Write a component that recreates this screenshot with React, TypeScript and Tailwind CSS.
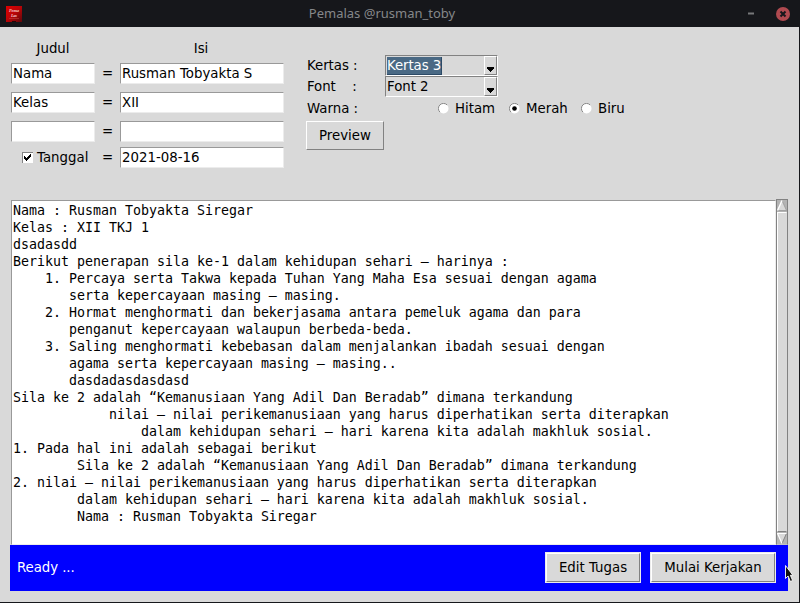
import React from "react";

const lines: string[] = [
  "Nama : Rusman Tobyakta Siregar",
  "Kelas : XII TKJ 1",
  "dsadasdd",
  "Berikut penerapan sila ke-1 dalam kehidupan sehari – harinya :",
  "    1. Percaya serta Takwa kepada Tuhan Yang Maha Esa sesuai dengan agama",
  "       serta kepercayaan masing – masing.",
  "    2. Hormat menghormati dan bekerjasama antara pemeluk agama dan para",
  "       penganut kepercayaan walaupun berbeda-beda.",
  "    3. Saling menghormati kebebasan dalam menjalankan ibadah sesuai dengan",
  "       agama serta kepercayaan masing – masing..",
  "       dasdadasdasdasd",
  "Sila ke 2 adalah “Kemanusiaan Yang Adil Dan Beradab” dimana terkandung",
  "            nilai – nilai perikemanusiaan yang harus diperhatikan serta diterapkan",
  "                dalam kehidupan sehari – hari karena kita adalah makhluk sosial.",
  "1. Pada hal ini adalah sebagai berikut",
  "        Sila ke 2 adalah “Kemanusiaan Yang Adil Dan Beradab” dimana terkandung",
  "2. nilai – nilai perikemanusiaan yang harus diperhatikan serta diterapkan",
  "        dalam kehidupan sehari – hari karena kita adalah makhluk sosial.",
  "        Nama : Rusman Tobyakta Siregar",
];

function Entry({ value, width }: { value: string; width: string }) {
  return (
    <div
      className={`${width} h-[21px] shrink-0 overflow-hidden whitespace-pre border border-t-[#999] border-l-[#999] border-r-[#ececec] border-b-[#ececec] bg-white pl-px leading-[19px]`}
    >
      {value}
    </div>
  );
}

function Row({ label, value }: { label: React.ReactNode; value: string }) {
  return (
    <div className="flex h-[21px] items-center">
      {label}
      <div className="w-[25px] text-center">=</div>
      <Entry value={value} width="w-[164px]" />
    </div>
  );
}

function Combo({ value, selected }: { value: string; selected?: boolean }) {
  return (
    <div className="flex h-[21px] w-[113px] border border-t-[#828282] border-l-[#828282] border-r-white border-b-white pl-px">
      <div className="flex flex-1 items-start whitespace-nowrap">
        <span
          className={
            selected
              ? "mt-px h-[18px] w-[55px] border-r border-b border-[#2c4a66] bg-[#4a6984] leading-[17px] tracking-[-0.1px] text-white"
              : "mt-px leading-[17px] tracking-[-0.05px]"
          }
        >
          {value}
        </span>
      </div>
      <div className="flex h-[19px] w-[13px] items-end justify-center border border-t-white border-l-white border-r-[#828282] border-b-[#828282] pb-[2px]">
        <svg width="7" height="5" viewBox="0 0 7 5" shapeRendering="crispEdges">
          <path d="M0 0h7v2H0zM1 2h5v1H1zM2 3h3v1H2zM3 4h1v1H3z" fill="#000" />
        </svg>
      </div>
    </div>
  );
}

function Radio({ label, checked, width }: { label: string; checked?: boolean; width: string }) {
  return (
    <div className={`flex ${width} items-center`}>
      <svg width="11" height="11" viewBox="0 0 11 11">
        <circle cx="5.5" cy="5.5" r="5" fill="#fff" />
        <path d="M1.9 9.1A5 5 0 0 1 9.1 1.9" fill="none" stroke="#888" />
        {checked && <circle cx="5.5" cy="5.5" r="2.3" fill="#000" />}
      </svg>
      <span className="ml-[6px]">{label}</span>
    </div>
  );
}

function Button({ label, className }: { label: string; className: string }) {
  return (
    <div
      className={`${className} flex items-center justify-center border border-t-white border-l-white border-r-[#828282] border-b-[#828282] bg-[#d9d9d9] whitespace-nowrap`}
    >
      {label}
    </div>
  );
}

export default function App() {
  return (
    <div className="relative flex h-[603px] w-[800px] flex-col overflow-hidden bg-[#d9d9d9] font-['DejaVu_Sans',sans-serif] text-[13.33px] leading-[17px] text-black">
      <header className="flex h-[27px] shrink-0 items-center bg-[#16171b] pl-[6px] pr-[10px]">
        <svg width="16" height="16" viewBox="0 0 16 16">
          <defs>
            <linearGradient id="logo" x1="0" y1="0" x2="1" y2="1">
              <stop offset="0" stopColor="#e00000" />
              <stop offset="0.5" stopColor="#b90508" />
              <stop offset="1" stopColor="#5d080b" />
            </linearGradient>
          </defs>
          <rect width="16" height="16" fill="url(#logo)" />
          <text x="3" y="6.2" fontSize="4.5" fontFamily="Liberation Serif, serif" fontStyle="italic" fontWeight="700" fill="#f3c8c8" textLength="10">Pema</text>
          <text x="5" y="11.2" fontSize="4.5" fontFamily="Liberation Serif, serif" fontStyle="italic" fontWeight="700" fill="#f3c8c8" textLength="6">Las</text>
          <path d="M3 12.5h10" stroke="#c84848" strokeWidth="0.5" />
          <path d="M6 15.5h4" stroke="#260506" />
        </svg>
        <div className="flex-1 pr-[5px] text-center font-['Noto_Sans',sans-serif] text-[13px] text-[#85878a]">
          <span>Pemalas @rusman_toby</span>
        </div>
        <svg width="43" height="14" viewBox="0 0 43 14">
          <path d="M1 5.5h6v2H1z" fill="#77787a" />
          <circle cx="36" cy="7" r="7" fill="#b04a50" />
          <path d="M33.5 4.5l5 5m0-5l-5 5" stroke="#16171b" strokeWidth="2" />
        </svg>
      </header>

      <div className="flex min-h-0 flex-1 flex-col border-r border-b border-[#16171b] pl-[10px] pr-[11px]">
        <section className="flex h-[172px] shrink-0">
          <div className="flex w-[296px] flex-col pl-px pt-[13px]">
            <div className="flex h-[17px]">
              <div className="w-[84px] text-center">Judul</div>
              <div className="ml-[25px] w-[162px] text-center">Isi</div>
            </div>
            <div className="mt-[6px] flex flex-col gap-2">
              <Row label={<Entry value="Nama" width="w-[84px]" />} value="Rusman Tobyakta S" />
              <Row label={<Entry value="Kelas" width="w-[84px]" />} value="XII" />
              <Row label={<Entry value="" width="w-[84px]" />} value="" />
            </div>
            <div className="mt-[5px]">
              <Row
                label={
                  <div className="flex w-[84px] items-center pl-[11px]">
                    <svg width="11" height="11" viewBox="0 0 11 11" shapeRendering="crispEdges">
                      <path d="M0 0h11v11H0z" fill="#fff" />
                      <path d="M0 0h11v1H1v10H0z" fill="#828282" />
                      <path d="M2 4h1v3H2zM3 5h1v3H3zM4 6h1v3H4zM5 5h1v3H5zM6 4h1v3H6zM7 3h1v3H7zM8 2h1v3H8z" fill="#000" />
                    </svg>
                    <span className="ml-[4px]">Tanggal</span>
                  </div>
                }
                value="2021-08-16"
              />
            </div>
          </div>

          <div className="flex flex-col pt-[28px]">
            <div className="flex h-[21px] items-center">
              <div className="w-[79px] whitespace-pre pl-px tracking-[-0.05px]">Kertas :</div>
              <Combo value="Kertas 3" selected />
            </div>
            <div className="flex h-[21px] items-center">
              <div className="w-[79px] whitespace-pre pl-px tracking-[-0.1px]">{"Font    :"}</div>
              <Combo value="Font 2" />
            </div>
            <div className="flex h-[22px] items-center">
              <div className="w-[132px] pl-px">Warna :</div>
              <Radio label="Hitam" width="w-[71px]" />
              <Radio label="Merah" checked width="w-[72px]" />
              <Radio label="Biru" width="w-[50px]" />
            </div>
            <Button label="Preview" className="mt-[2px] h-[29px] w-[78px]" />
          </div>
        </section>

        <section className="flex h-[346px] shrink-0 pl-px">
          <div className="mt-px flex-1 overflow-hidden border border-t-[#999] border-l-[#999] border-r-[#ececec] border-b-[#ececec] bg-white pl-px pt-px font-['DejaVu_Sans_Mono',monospace] text-[13.29px]">
            {lines.map((line, i) => (
              <div key={i} className="h-[17px] whitespace-pre leading-[17px]">
                {line}
              </div>
            ))}
          </div>
          <div className="flex w-[12px] flex-col border border-t-[#828282] border-l-[#828282] border-r-[#828282] border-b-[#c3c3c3] bg-[#b3b3b3]">
            <svg width="10" height="11" viewBox="0 0 10 11">
              <path d="M5 0.5L0.5 10.5h9z" fill="#d9d9d9" />
              <path d="M5 0.5L9.5 10.5H0" fill="none" stroke="#999" strokeWidth="0.8" />
              <path d="M5 0.5L0.5 10.5" stroke="#fff" strokeWidth="1.4" />
            </svg>
            <div className="mt-px flex-1 border border-t-white border-l-white border-r-[#d9d9d9] border-b-[#828282] bg-[#d9d9d9]" />
            <svg className="mt-px" width="10" height="11" viewBox="0 0 10 11">
              <path d="M0.5 0.5h9L5 10.5z" fill="#d9d9d9" />
              <path d="M9.5 0.5L5 10.5" stroke="#828282" />
              <path d="M9.5 0.5h-9L5 10.5" fill="none" stroke="#fff" strokeWidth="1.2" />
            </svg>
          </div>
        </section>

        <footer className="flex h-[46px] shrink-0 items-start bg-[#0000ff] pl-[7px] pr-[12px] pt-[7px]">
          <span className="flex-1 pt-[7px] tracking-[-0.08px] text-white">Ready ...</span>
          <div className="border border-[#ececec]">
            <Button label="Edit Tugas" className="h-[29px] w-[94px]" />
          </div>
          <div className="ml-[9px] border border-[#ececec]">
            <Button label="Mulai Kerjakan" className="h-[29px] w-[124px]" />
          </div>
        </footer>
      </div>

      <svg className="absolute left-[784px] top-[564px]" width="11" height="20" viewBox="0 0 11 20">
        <path d="M1.5 1.5v13l2.6-2.5 2.3 5.5 2.2-1-2.2-5.2h2.5z" fill="#111" stroke="#fff" strokeWidth="0.9" />
      </svg>
    </div>
  );
}
